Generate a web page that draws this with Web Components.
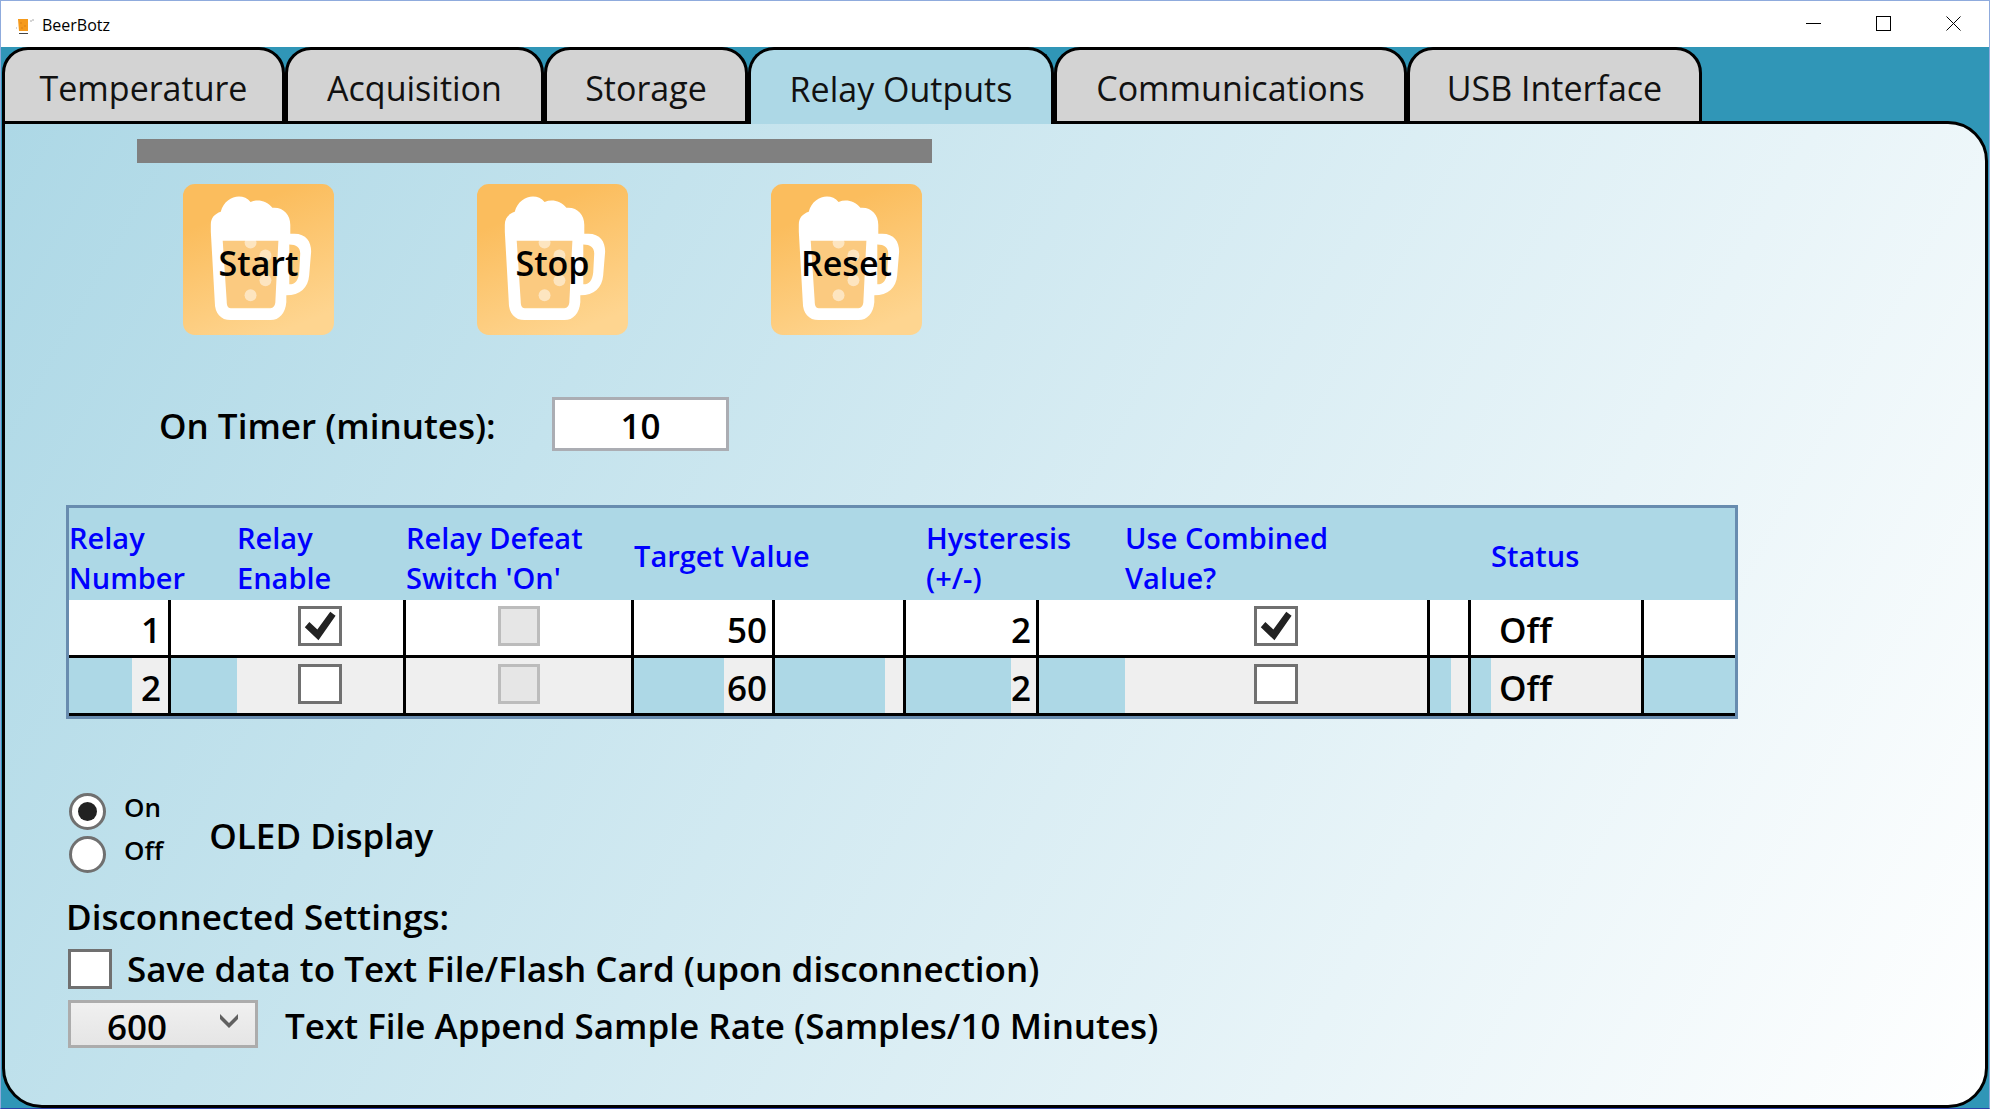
<!DOCTYPE html>
<html lang="en">
<head>
<meta charset="utf-8">
<title>BeerBotz</title>
<style>
html, body{
    height: 100%;
    margin: 0;
}
body{
    font-family: "Open Sans", "Noto Sans", sans-serif;
    color: #000;
}
</style>
</head>
<body>
<app-window></app-window>

<template id="title-bar">
<style>
:host{
    display: flex;
    align-items: center;
    justify-content: space-between;
    height: 46px;
    background: #fff;
    font-size: 16px;
}
.name{
    display: flex;
    align-items: center;
    gap: 8px;
    padding: 2px 0 0 13px;
}
.controls{
    display: flex;
    height: 100%;
}
button{
    width: 70px;
    padding: 0;
    border: 0;
    background: none;
}
button svg{
    display: block;
    margin: auto;
}
</style>
<div class="name">
    <svg width="20" height="26" viewBox="0 0 20 26" aria-hidden="true">
        <path d="M4 7h10v12H5z" fill="#f59a1c"/>
        <path d="M6 10h2v2H6zM10 13h2v2h-2zM7 15h2v2H7z" fill="#e98d18"/>
        <path d="M5 21.500h9" stroke="#444" stroke-width="1"/>
        <path d="M17 8v2M19 7v2M2 16h1" stroke="#aaa" stroke-width="1"/>
    </svg>
    <span><slot></slot></span>
</div>
<div class="controls">
    <button aria-label="Minimize"><svg width="16" height="16" shape-rendering="crispEdges"><path d="M0 7.500h15" stroke="#000"/></svg></button>
    <button aria-label="Maximize"><svg width="16" height="16" shape-rendering="crispEdges"><path d="M.5.5h14v14H.5z" fill="none" stroke="#000"/></svg></button>
    <button aria-label="Close"><svg width="16" height="16"><path d="M.5.5l14 14M14.500.5l-14 14" stroke="#000"/></svg></button>
</div>
</template>

<template id="tab-strip">
<style>
:host{
    display: grid;
    grid-template-columns: 283fr 259fr 204fr 306fr 353fr 295fr 286fr;
    height: 77px;
    margin-bottom: -3px;
    position: relative;
}
button{
    padding: 4px 0 0;
    border: 3px solid #000;
    border-radius: 26px 26px 0 0;
    background: #d3d3d3;
    color: #111;
    font: inherit;
    font-size: 34px;
    line-height: 48px;
    white-space: nowrap;
}
button[aria-selected="true"]{
    border-bottom-width: 0;
    background: #add8e6;
}
</style>
</template>

<template id="beer-button">
<style>
:host{
    display: block;
}
button{
    display: grid;
    place-items: center;
    width: 151px;
    height: 151px;
    padding: 0;
    border: 0;
    background: none;
    font: inherit;
    font-size: 34px;
    line-height: 48px;
}
svg, span{
    grid-area: 1 / 1;
}
span{
    padding-top: 6px;
}
</style>
<button>
    <svg width="151" height="151" viewBox="0 0 152 152" aria-hidden="true">
        <defs>
            <linearGradient id="tile" x1="0.200" y1="0" x2="0.600" y2="1">
                <stop offset="0.200" stop-color="#fbbd5d"/>
                <stop offset="1" stop-color="#fed590"/>
            </linearGradient>
        </defs>
        <rect width="152" height="152" rx="12" fill="url(#tile)"/>
        <path d="M40 56H96V124H44Z" fill="#fbca80"/>
        <g fill="#fff" fill-opacity=".5">
            <circle cx="68" cy="59" r="6"/>
            <circle cx="83" cy="72" r="6"/>
            <circle cx="83" cy="97" r="6"/>
            <circle cx="68" cy="112" r="6"/>
        </g>
        <path fill="#fff" fill-rule="evenodd" d="M28 41C28 34 32 30 38 28C42 12 60 8 68 18C76 15 84 17 90 24C101 23 108 31 108 41V50H112C124 50 129 58 129 68L127 92C126 104 118 112 104 112V119C103 130 97 137 88 137H48C38 137 32 130 32 119L28 48ZM40 57L44 118C44 122 45 125 48 125H88C91 125 93 122 93 118L96 57ZM107 61V101C113 101 116 97 117 89L118 70C118 64 114 61 107 61Z"/>
    </svg>
    <span><slot></slot></span>
</button>
</template>

<template id="check-box">
<style>
:host{
    display: inline-block;
    vertical-align: top;
}
label{
    display: flex;
    align-items: center;
    gap: 15px;
}
input{
    appearance: none;
    box-sizing: border-box;
    width: 44px;
    height: 40px;
    margin: 0;
    border: 3px solid #707070;
    background: #fff;
}
input:checked::before{
    content: "";
    display: block;
    width: 100%;
    height: 100%;
    background: #222;
    clip-path: polygon(10% 54%, 22% 38%, 43% 60%, 77% 8%, 91% 20%, 46% 92%);
}
input:disabled{
    width: 42px;
    border-color: #bcbcbc;
    background: #e6e6e6;
}
</style>
<label><input type="checkbox"><slot></slot></label>
</template>

<template id="relay-grid">
<style>
:host{
    display: block;
    border: 3px solid #688caf;
    background: #add8e6;
}
table{
    width: 100%;
    table-layout: fixed;
    border-collapse: separate;
    border-spacing: 0;
}
th{
    height: 92px;
    box-sizing: border-box;
    padding: 4px 0 0;
    color: #00f;
    font-size: 29px;
    font-weight: 600;
    line-height: 40px;
    text-align: left;
    white-space: nowrap;
}
.two{
    padding-top: 8px;
}
.gap{
    padding-left: 20px;
}
.wide{
    padding-left: 66px;
}
.wider{
    padding-left: 86px;
}
td{
    height: 58px;
    box-sizing: border-box;
    padding: 4px 5px 0 0;
    border-right: 3px solid #000;
    border-bottom: 3px solid #000;
    background: #fff;
    line-height: 48px;
    text-align: right;
}
td:first-child{
    padding-right: 7px;
}
td:last-child{
    border-right: 0;
}
.mark{
    padding-right: 0;
    padding-top: 6px;
    text-align: center;
    vertical-align: top;
}
.state{
    padding-left: 28px;
    text-align: left;
}
tr:nth-child(2) td{
    background: linear-gradient(90deg, #add8e6 var(--split, 0px), #efefef 0);
}
</style>
<table>
    <colgroup>
        <col style="width:102px"><col style="width:235px"><col style="width:228px"><col style="width:141px">
        <col style="width:131px"><col style="width:133px"><col style="width:391px"><col style="width:41px">
        <col style="width:173px"><col>
    </colgroup>
    <thead>
        <tr>
            <th class="two">Relay<br>Number</th>
            <th class="two wide">Relay<br>Enable</th>
            <th class="two">Relay Defeat<br>Switch 'On'</th>
            <th colspan="2">Target Value</th>
            <th class="two gap">Hysteresis<br>(+/-)</th>
            <th class="two wider" colspan="2">Use Combined<br>Value?</th>
            <th class="gap" colspan="2">Status</th>
        </tr>
    </thead>
    <tbody></tbody>
</table>
</template>

<template id="relay-panel">
<style>
:host{
    display: block;
    box-sizing: border-box;
    padding: 15px 247px 0 61px;
    border: 3px solid #000;
    border-radius: 0 40px 40px 40px;
    background: linear-gradient(119deg, #add8e6, #fff);
    font-size: 35px;
    font-weight: 600;
    line-height: 48px;
}
.progress{
    width: 795px;
    height: 24px;
    margin-left: 71px;
    background: #808080;
}
.actions{
    display: flex;
    gap: 143px;
    margin: 21px 0 0 117px;
}
.timer{
    display: flex;
    align-items: center;
    margin: 62px 0 0 93px;
}
.timer label{
    width: 393px;
    padding-top: 4px;
}
.timer input{
    box-sizing: border-box;
    width: 177px;
    height: 54px;
    padding: 2px 0 0;
    border: 3px solid #abadb3;
    background: #fff;
    font: inherit;
    text-align: center;
}
relay-grid{
    margin-top: 54px;
}
.oled{
    display: flex;
    align-items: center;
    gap: 46px;
    margin: 71px 0 0 3px;
}
.oled > span{
    padding-top: 6px;
}
.choices{
    display: grid;
    gap: 1px;
}
.choices label{
    display: flex;
    align-items: center;
    gap: 18px;
    font-size: 26px;
    line-height: 34px;
}
.choices input{
    appearance: none;
    display: grid;
    place-items: center;
    box-sizing: border-box;
    width: 37px;
    height: 37px;
    margin: 0;
    border: 3px solid #707070;
    border-radius: 50%;
    background: #fff;
}
.choices input:checked::before{
    content: "";
    width: 19px;
    height: 19px;
    border-radius: 50%;
    background: #222;
}
.choices label span{
    padding-bottom: 8px;
}
h2{
    margin: 18px 0 4px;
    font: inherit;
}
check-box{
    display: block;
    margin-left: 2px;
}
.rate{
    display: flex;
    align-items: center;
    gap: 27px;
    margin: 5px 0 0 2px;
}
.rate label{
    padding-top: 4px;
}
.drop{
    display: grid;
    align-items: center;
}
select, .drop svg{
    grid-area: 1 / 1;
}
select{
    appearance: none;
    box-sizing: border-box;
    width: 190px;
    height: 48px;
    padding: 4px 0 0 36px;
    border: 3px solid #acacac;
    border-radius: 0;
    background: linear-gradient(#f0f0f0, #e5e5e5);
    color: #000;
    font: inherit;
    line-height: 40px;
}
.drop svg{
    justify-self: end;
    margin: 0 20px 6px 0;
    pointer-events: none;
}
</style>
<div class="progress" role="progressbar" aria-label="Timer progress"></div>
<div class="actions">
    <beer-button>Start</beer-button>
    <beer-button>Stop</beer-button>
    <beer-button>Reset</beer-button>
</div>
<div class="timer">
    <label for="minutes">On Timer (minutes):</label>
    <input id="minutes" type="text" value="10">
</div>
<relay-grid></relay-grid>
<div class="oled" role="radiogroup" aria-labelledby="oled">
    <div class="choices">
        <label><input type="radio" name="oled" checked><span>On</span></label>
        <label><input type="radio" name="oled"><span>Off</span></label>
    </div>
    <span id="oled">OLED Display</span>
</div>
<h2>Disconnected Settings:</h2>
<check-box>Save data to Text File/Flash Card (upon disconnection)</check-box>
<div class="rate">
    <div class="drop">
        <select id="rate"><option>600</option></select>
        <svg width="18" height="14" viewBox="0 0 18 14" aria-hidden="true"><path d="M0 0L9 9L18 0V5L9 14L0 5Z" fill="#606060"/></svg>
    </div>
    <label for="rate">Text File Append Sample Rate (Samples/10 Minutes)</label>
</div>
</template>

<template id="app-window">
<style>
:host{
    display: flex;
    flex-direction: column;
    box-sizing: border-box;
    min-height: 100vh;
    border: 1px solid #8fabdd;
    border-bottom-color: #2c3fa8;
    background: #3096b7;
}
main{
    flex: 1;
    display: flex;
    flex-direction: column;
    padding: 0 1px;
}
relay-panel{
    flex: 1;
}
</style>
<title-bar>BeerBotz</title-bar>
<main>
    <tab-strip selected="Relay Outputs"></tab-strip>
    <relay-panel></relay-panel>
</main>
</template>

<script>
class BaseElement extends HTMLElement{
    constructor() {
        super();
        this.attachShadow({mode: 'open'});
        const template = document.getElementById(this.localName);
        this.shadowRoot.appendChild(template.content.cloneNode(true));
    }
}

class TitleBar extends BaseElement{}

class TabStrip extends BaseElement{
    connectedCallback() {
        const names = ['Temperature', 'Acquisition', 'Storage', 'Relay Outputs', 'Communications', 'USB Interface'];
        this.setAttribute('role', 'tablist');
        names.forEach(name => {
            const tab = document.createElement('button');
            tab.textContent = name;
            tab.setAttribute('role', 'tab');
            tab.setAttribute('aria-selected', name === this.getAttribute('selected'));
            this.shadowRoot.appendChild(tab);
        });
    }
}

class BeerButton extends BaseElement{}

class CheckBox extends BaseElement{
    connectedCallback() {
        const input = this.shadowRoot.querySelector('input');
        input.checked = this.hasAttribute('checked');
        input.disabled = this.hasAttribute('disabled');
        if (this.hasAttribute('name')) {
            input.setAttribute('aria-label', this.getAttribute('name'));
        }
    }
}

class RelayGrid extends BaseElement{
    connectedCallback() {
        const relays = [
            {number: 1, enabled: true, target: 50, hysteresis: 2, combined: true, status: 'Off'},
            {number: 2, enabled: false, target: 60, hysteresis: 2, combined: false, status: 'Off'}
        ];
        this.shadowRoot.querySelector('tbody').innerHTML = relays.map(r => `
            <tr>
                <td style="--split:63px">${r.number}</td>
                <td class="mark wide" style="--split:66px"><check-box name="Relay ${r.number} enable" ${r.enabled ? 'checked' : ''}></check-box></td>
                <td class="mark"><check-box name="Relay ${r.number} defeat switch" disabled></check-box></td>
                <td style="--split:90px">${r.target}</td>
                <td style="--split:110px"></td>
                <td style="--split:105px">${r.hysteresis}</td>
                <td class="mark wider" style="--split:86px"><check-box name="Relay ${r.number} combined value" ${r.combined ? 'checked' : ''}></check-box></td>
                <td style="--split:21px"></td>
                <td class="state" style="--split:20px">${r.status}</td>
                <td style="--split:100%"></td>
            </tr>`).join('');
    }
}

class RelayPanel extends BaseElement{}

class AppWindow extends BaseElement{}

customElements.define('title-bar', TitleBar);
customElements.define('tab-strip', TabStrip);
customElements.define('beer-button', BeerButton);
customElements.define('check-box', CheckBox);
customElements.define('relay-grid', RelayGrid);
customElements.define('relay-panel', RelayPanel);
customElements.define('app-window', AppWindow);
</script>
</body>
</html>
